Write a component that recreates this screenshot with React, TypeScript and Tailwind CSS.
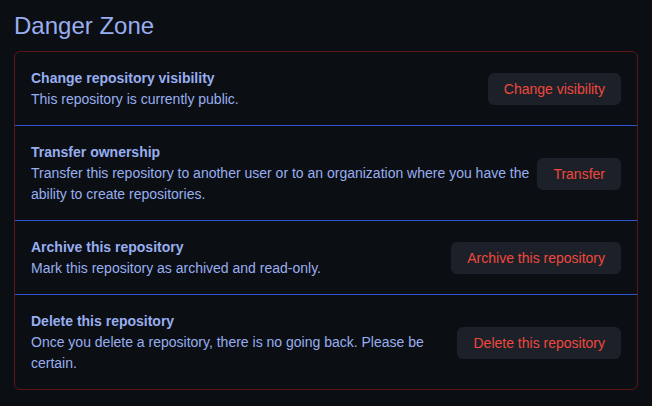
import React from 'react';

type Item = {
  title: string;
  desc: string;
  action: string;
};

const items: Item[] = [
  {
    title: 'Change repository visibility',
    desc: 'This repository is currently public.',
    action: 'Change visibility',
  },
  {
    title: 'Transfer ownership',
    desc: 'Transfer this repository to another user or to an organization where you have the ability to create repositories.',
    action: 'Transfer',
  },
  {
    title: 'Archive this repository',
    desc: 'Mark this repository as archived and read-only.',
    action: 'Archive this repository',
  },
  {
    title: 'Delete this repository',
    desc: 'Once you delete a repository, there is no going back. Please be certain.',
    action: 'Delete this repository',
  },
];

const App: React.FC = () => {
  return (
    <div className="min-h-screen w-[652px] h-[406px] bg-[#0b0e13] px-[14px] pt-[8px] font-['Liberation_Sans',Arial,sans-serif] text-[#98aef0]">
      <h2 className="text-[24px] leading-[36px] font-normal mb-[7px]">Danger Zone</h2>

      {/* Danger box */}
      <div className="border border-[#5e1515] rounded-[6px]">
        {items.map((item, idx) => (
          <div
            key={idx}
            className={`flex items-center gap-2 px-4 pt-4 pb-[15px] ${idx > 0 ? 'border-t border-[#2f55d4]' : ''}`}
          >
            <div className="flex-1 text-[14px] leading-[21px]">
              <div className="font-bold">{item.title}</div>
              <div>{item.desc}</div>
            </div>
            <button className="shrink-0 h-[32px] px-4 rounded-[6px] bg-[#1c2028] text-[#f0483e] text-[14px] leading-[20px]">
              {item.action}
            </button>
          </div>
        ))}
      </div>
    </div>
  );
};

export default App;
